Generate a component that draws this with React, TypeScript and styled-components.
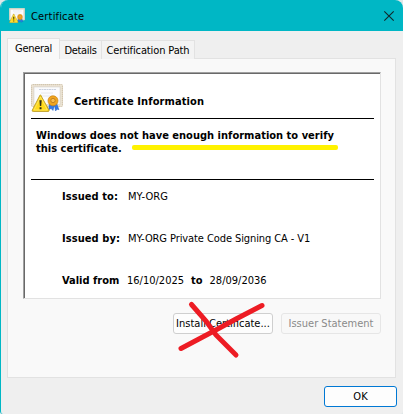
import React from 'react';
import styled, { createGlobalStyle } from 'styled-components';

const Global = createGlobalStyle`
  *, *::before, *::after { box-sizing: border-box; }
  body { margin: 0; overflow: hidden; background: #dfe7e8; }
`;

const Dialog = styled.div`
  position: relative;
  display: flex;
  flex-direction: column;
  width: 403px;
  height: 414px;
  overflow: hidden;
  background: #efefef;
  border-left: 1px solid #00b7c5;
  border-radius: 8px 8px 3px 3px;
  color: #000;
  font: 11px/13px "DejaVu Sans Condensed", "DejaVu Sans", sans-serif;
  white-space: nowrap;
`;

const TitleBar = styled.header`
  display: flex;
  flex: none;
  align-items: center;
  height: 31px;
  padding: 0 8px 0 8px;
  background: #00b7c5;
`;

const Title = styled.h1`
  flex: 1;
  margin: 1px 0 0 6px;
  font-size: 11px;
  font-weight: 400;
  letter-spacing: 0.17px;
`;

const CloseButton = styled.button`
  display: flex;
  width: 12px;
  height: 12px;
  margin: 0;
  padding: 0;
  border: 0;
  background: none;
`;

const Tabs = styled.nav`
  display: flex;
  flex: none;
  align-items: flex-end;
  height: 28px;
  margin-left: 6px;
`;

const Tab = styled.button<{ $width: number; $active?: boolean; $spacing?: number }>`
  z-index: ${p => (p.$active ? 1 : 0)};
  width: ${p => p.$width}px;
  height: ${p => (p.$active ? 21 : 19)}px;
  padding: ${p => (p.$active ? '0 0 2px' : '1px 0 0')};
  border: 1px solid #e2e2e2;
  border-bottom: 0;
  border-left-width: ${p => (p.$active ? 1 : 0)}px;
  background: ${p => (p.$active ? '#f9f9f9' : '#f3f3f3')};
  color: #000;
  font: inherit;
  letter-spacing: ${p => p.$spacing ?? 0}px;
`;

const Panel = styled.main`
  display: flex;
  flex: none;
  flex-direction: column;
  width: 389px;
  height: 320px;
  margin: -1px 0 0 6px;
  padding: 13px 14px 0 15px;
  border: 1px solid #e2e2e2;
  background: #f9f9f9;
`;

const Sheet = styled.section`
  flex: none;
  height: 227px;
  padding: 11px 6px 0 7px;
  border: 1px solid;
  border-color: #a0a0a0 #e2e2e2 #e2e2e2 #a0a0a0;
  background: #fff;
  box-shadow: inset 1px 1px #696969;
`;

const SheetHead = styled.div`
  display: flex;
  height: 35px;
  border-bottom: 1px solid #000;
`;

const Heading = styled.h2`
  margin: 11px 0 0 11px;
  font-size: 11px;
  letter-spacing: 0.1px;
`;

const Message = styled.div`
  height: 61px;
  padding: 10px 0 0 5px;
  border-bottom: 1px solid #000;
  font-weight: 700;
  letter-spacing: 0.015px;
`;

const MessageLine = styled.div`
  display: flex;
  align-items: center;
`;

const Highlight = styled.span`
  width: 206px;
  height: 5px;
  margin-left: 10px;
  margin-bottom: 2px;
  border-radius: 2px;
  background: #fff200;
`;

const Field = styled.div`
  display: flex;
  height: 42px;
  padding-left: 31px;
  &:first-of-type { margin-top: 10px; }
`;

const FieldList = styled.div`
  padding-top: 0;
`;

const Label = styled.b<{ $width: number; $spacing?: number }>`
  width: ${p => p.$width}px;
  letter-spacing: ${p => p.$spacing ?? 0}px;
`;

const Value = styled.span<{ $spacing?: number }>`
  letter-spacing: ${p => p.$spacing ?? 0}px;
`;

const Joiner = styled.b`
  margin: 0 7px;
`;

const Actions = styled.div`
  display: flex;
  justify-content: flex-end;
  gap: 8px;
  margin-top: 14px;
`;

const Button = styled.button<{ $width?: number; $primary?: boolean }>`
  width: ${p => p.$width ?? 100}px;
  height: 21px;
  padding: 0;
  border: 1px solid ${p => (p.$primary ? '#0078d4' : '#cfcfcf')};
  border-radius: 3px;
  background: #fdfdfd;
  color: #000;
  font: inherit;
  &:disabled {
    border-color: #e6e6e6;
    background: #f8f8f8;
    color: #8a8a8a;
  }
`;

const Footer = styled.footer`
  display: flex;
  justify-content: flex-end;
  padding: 8px 6px 0 0;
`;

const Scribble = styled.svg`
  position: absolute;
  left: 176px;
  top: 299px;
  pointer-events: none;
`;

function CertificateIcon({ width, height }: { width: number; height: number }) {
  return (
    <svg width={width} height={height} viewBox="0 0 32 28" preserveAspectRatio="none">
      <rect x="0.5" y="0.5" width="31" height="22" rx="1" fill="#e8dfce" stroke="#d2c6b0" />
      <rect x="1" y="1" width="30" height="21" fill="none" stroke="#f1eadc" strokeDasharray="1 1" />
      <rect x="3" y="3" width="26" height="17.5" fill="#fbfbfd" stroke="#d8d5d0" strokeWidth="0.6" />
      <path d="M8 5.5h17" stroke="#c9d0de" strokeDasharray="2 .5" />
      <path d="M10 9h12M8 12h14" stroke="#e6e8ec" />
      <path d="M18.5 19l-1 7 2.5-1.5 2 2 1.5-5 1 5.5 1.8-1.8 1.7.5-3-8z" fill="#3479e6" stroke="#1653b5" strokeWidth="0.4" />
      <circle cx="22" cy="16.8" r="5" fill="#f0a51f" stroke="#cb8212" strokeWidth="0.7" />
      <circle cx="22" cy="16.5" r="2.2" fill="#f8bd4c" stroke="#b8741a" strokeWidth="0.8" />
      <path d="M9.7 11.2L18 26.2q.4 1.2-1 1.2H2.2q-1.4 0-.9-1.2L9 11.2q.3-.5.7 0z" fill="#ffd91a" stroke="#c0a02c" />
      <path d="M9.5 13L16.3 26H3z" fill="none" stroke="#ffee83" strokeWidth="0.6" />
      <path d="M8.4 16.3h2.3l-.5 5.6H8.9zM8.6 23.2h1.9v2H8.6z" fill="#302b18" />
    </svg>
  );
}

export default function App() {
  return (
    <>
      <Global />
      <Dialog>
        <TitleBar>
          <CertificateIcon width={16} height={15} />
          <Title>Certificate</Title>
          <CloseButton aria-label="Close">
            <svg width="12" height="12" viewBox="0 0 12 12">
              <path d="M1.3 1.3l9.4 9.4M10.7 1.3L1.3 10.7" stroke="#10282b" strokeWidth="1.1" />
            </svg>
          </CloseButton>
        </TitleBar>
        <Tabs>
          <Tab $width={53} $active $spacing={-0.3}>General</Tab>
          <Tab $width={42} $spacing={-0.3}>Details</Tab>
          <Tab $width={93} $spacing={-0.12}>Certification Path</Tab>
        </Tabs>
        <Panel>
          <Sheet>
            <SheetHead>
              <CertificateIcon width={32} height={28} />
              <Heading>Certificate Information</Heading>
            </SheetHead>
            <Message>
              <MessageLine>Windows does not have enough information to verify</MessageLine>
              <MessageLine>
                this certificate.
                <Highlight />
              </MessageLine>
            </Message>
            <FieldList>
              <Field>
                <Label $width={66} $spacing={0.08}>Issued to:</Label>
                <Value $spacing={0.08}>MY-ORG</Value>
              </Field>
              <Field>
                <Label $width={66} $spacing={0.08}>Issued by:</Label>
                <Value $spacing={-0.09}>MY-ORG Private Code Signing CA - V1</Value>
              </Field>
              <Field>
                <Label $width={65}>Valid from</Label>
                <Value>16/10/2025</Value>
                <Joiner>to</Joiner>
                <Value>28/09/2036</Value>
              </Field>
            </FieldList>
          </Sheet>
          <Actions>
            <Button>Install Certificate...</Button>
            <Button disabled>Issuer Statement</Button>
          </Actions>
        </Panel>
        <Footer>
          <Button $width={73} $primary>OK</Button>
        </Footer>
        <Scribble width="90" height="62" viewBox="177 299 90 62" fill="none" stroke="#ed1c24" strokeWidth="5" strokeLinecap="round">
          <path d="M191.5 304.5L206 321L216 335L236 355" />
          <path d="M181 348.5L214 331L236 319L262 305.5" />
        </Scribble>
      </Dialog>
    </>
  );
}
